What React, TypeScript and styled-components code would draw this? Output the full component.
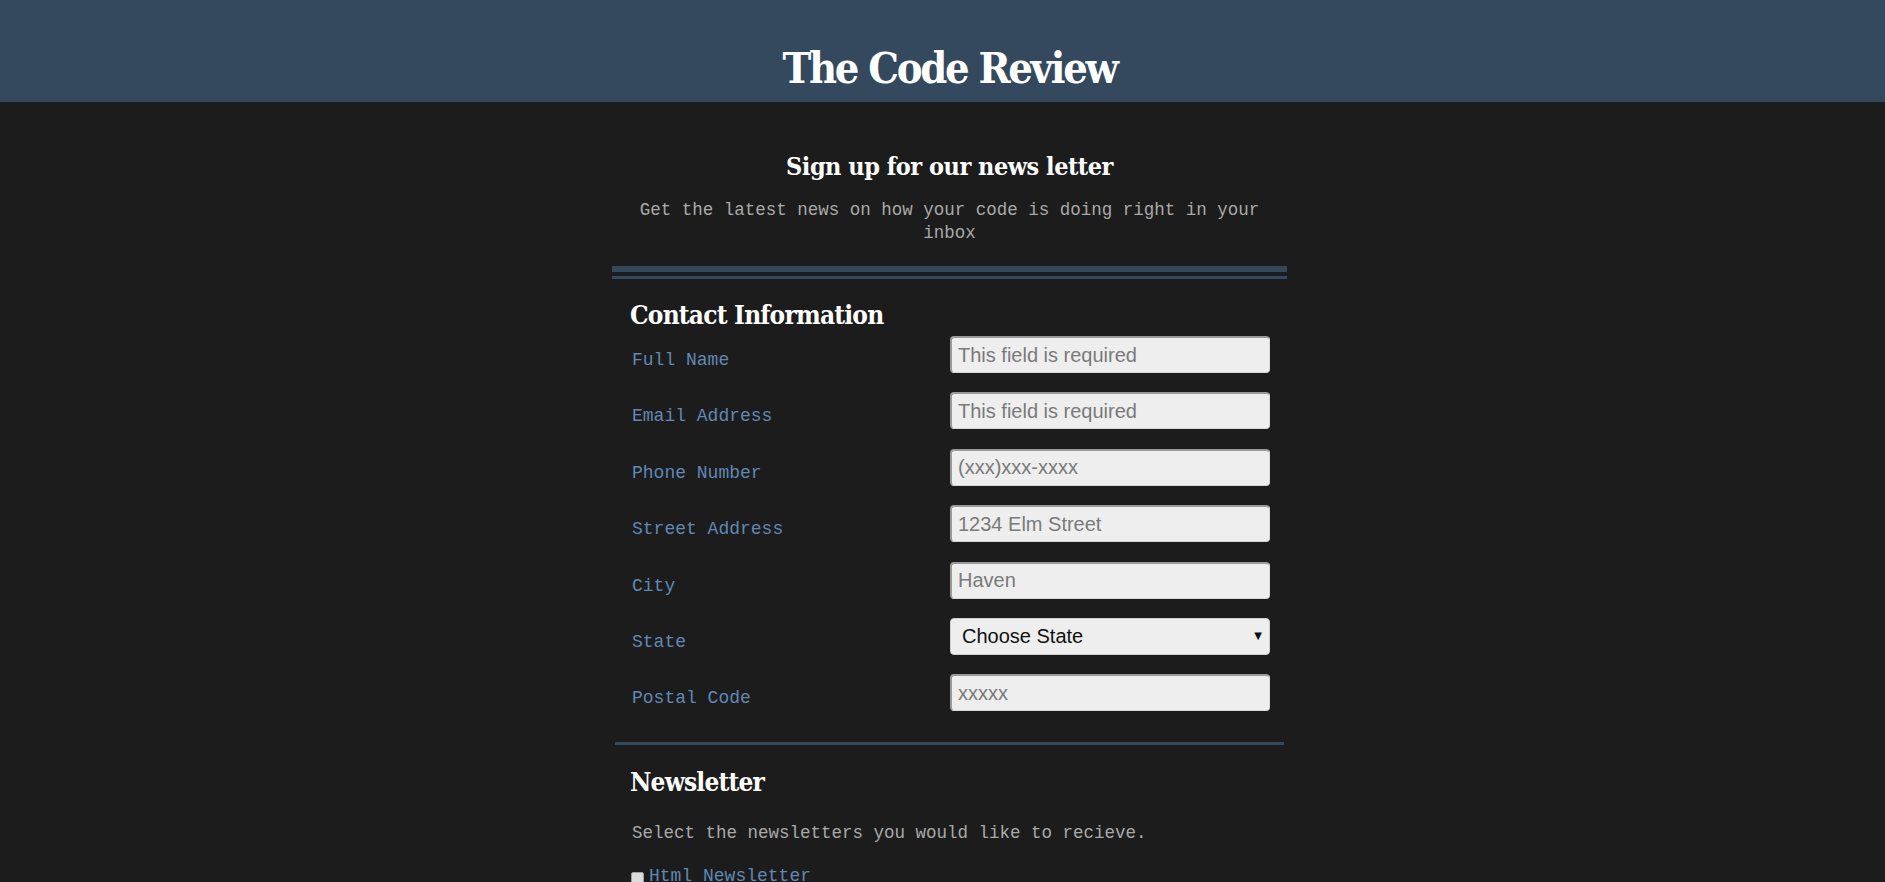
import React from "react";
import styled, { createGlobalStyle } from "styled-components";

const GlobalStyle = createGlobalStyle`
  html, body {
    margin: 0;
    padding: 0;
    background: #1c1c1c;
  }
  body {
    font-family: "Liberation Mono", "DejaVu Sans Mono", monospace;
  }
  * { box-sizing: border-box; }
`;

const serif = `"DejaVu Serif Condensed", "DejaVu Serif", serif`;

const Header = styled.header`
  background: #34495e;
  height: 102px;
  padding: 46px 0 0 14px;
`;

const Title = styled.h1`
  margin: 0;
  text-align: center;
  color: #ffffff;
  font-family: ${serif};
  font-stretch: condensed;
  font-weight: 700;
  font-size: 43px;
  line-height: 44px;
  letter-spacing: -2.3px;
`;

const Main = styled.main`
  padding-left: 14px;
`;

const Container = styled.div`
  width: 675px;
  margin: 0 auto;
`;

const Intro = styled.section`
  padding: 50px 18px 21px;
  border-bottom: 6px solid #34495e;
  text-align: center;
`;

const IntroHeading = styled.h2`
  margin: 0;
  color: #ffffff;
  font-family: ${serif};
  font-stretch: condensed;
  font-weight: 700;
  font-size: 25px;
  line-height: 30px;
  letter-spacing: -0.5px;
`;

const Lead = styled.p`
  margin: 17px 0 0;
  color: #a9a9a9;
  font-size: 17.5px;
  line-height: 23px;
`;

const Fieldset = styled.section<{ $top?: boolean }>`
  margin-top: ${(p) => (p.$top ? "4px" : "0")};
  border-top: ${(p) => (p.$top ? "3px solid #34495e" : "none")};
  padding: 21px 17px 31px 20px;
`;

const SectionHeading = styled.h3`
  margin: 0 0 6px -2px;
  color: #ffffff;
  font-family: ${serif};
  font-stretch: condensed;
  font-weight: 700;
  font-size: 26px;
  line-height: 30px;
  letter-spacing: -0.8px;
`;

const FieldGrid = styled.div`
  display: grid;
  grid-template-columns: 1fr 320px;
  row-gap: 19.4px;
`;

const Label = styled.label`
  color: #6088b4;
  font-size: 18px;
  line-height: 23px;
  padding-top: 13px;
`;

const TextInput = styled.input`
  width: 320px;
  height: 37px;
  margin: 0;
  padding: 0 6px;
  background: #eeeeee;
  border-style: solid;
  border-width: 2px 1px 1px 2px;
  border-color: #9a9a9a #d6d6d6 #d6d6d6 #9a9a9a;
  border-radius: 4px;
  font-family: "Liberation Sans", Arial, sans-serif;
  font-size: 20px;
  color: #222;
  outline: none;
  &::placeholder {
    color: #7a7a7a;
  }
`;

const SelectWrap = styled.div`
  position: relative;
  width: 320px;
  height: 37px;
`;

const Select = styled.select`
  width: 100%;
  height: 100%;
  margin: 0;
  padding: 0 24px 0 11px;
  appearance: none;
  background: #eeeeee;
  border: 1px solid #cfcfcf;
  border-radius: 4px;
  font-family: "Liberation Sans", Arial, sans-serif;
  font-size: 20px;
  color: #111;
  outline: none;
`;

const Arrow = styled.span`
  position: absolute;
  right: 8px;
  top: 50%;
  transform: translateY(-55%);
  font-family: "DejaVu Sans", sans-serif;
  font-size: 10px;
  color: #111;
  pointer-events: none;
`;

const Rule = styled.hr`
  margin: 0 3px;
  border: none;
  border-top: 3px solid #34495e;
  height: 0;
`;

const NewsSection = styled.section`
  padding: 22px 17px 20px 20px;
`;

const Hint = styled.p`
  margin: 24.8px 0 0;
  color: #a9a9a9;
  font-size: 17.5px;
  line-height: 23px;
`;

const CheckRow = styled.label`
  display: flex;
  align-items: center;
  margin-top: 20px;
  color: #6088b4;
  font-size: 18px;
  line-height: 23px;
`;

const Check = styled.input`
  appearance: none;
  width: 13px;
  height: 13px;
  margin: 3px 5px 0 -1px;
  background: #dcdcdc;
  border: 1px solid #a0a0a0;
  border-radius: 2px;
`;

const fields = [
  { label: "Full Name", placeholder: "This field is required" },
  { label: "Email Address", placeholder: "This field is required" },
  { label: "Phone Number", placeholder: "(xxx)xxx-xxxx" },
  { label: "Street Address", placeholder: "1234 Elm Street" },
  { label: "City", placeholder: "Haven" },
];

export default function App() {
  return (
    <>
      <GlobalStyle />
      <Header>
        <Title>The Code Review</Title>
      </Header>
      <Main>
        <Container>
          <Intro>
            <IntroHeading>Sign up for our news letter</IntroHeading>
            <Lead>Get the latest news on how your code is doing right in your inbox</Lead>
          </Intro>
          <Fieldset $top>
            <SectionHeading>Contact Information</SectionHeading>
            <FieldGrid>
              {fields.map((f) => (
                <React.Fragment key={f.label}>
                  <Label>{f.label}</Label>
                  <TextInput type="text" placeholder={f.placeholder} />
                </React.Fragment>
              ))}
              <Label>State</Label>
              <SelectWrap>
                <Select defaultValue="">
                  <option value="">Choose State</option>
                </Select>
                <Arrow>▼</Arrow>
              </SelectWrap>
              <Label>Postal Code</Label>
              <TextInput type="text" placeholder="xxxxx" />
            </FieldGrid>
          </Fieldset>
          <Rule />
          <NewsSection>
            <SectionHeading>Newsletter</SectionHeading>
            <Hint>Select the newsletters you would like to recieve.</Hint>
            <CheckRow>
              <Check type="checkbox" />
              Html Newsletter
            </CheckRow>
          </NewsSection>
        </Container>
      </Main>
    </>
  );
}
